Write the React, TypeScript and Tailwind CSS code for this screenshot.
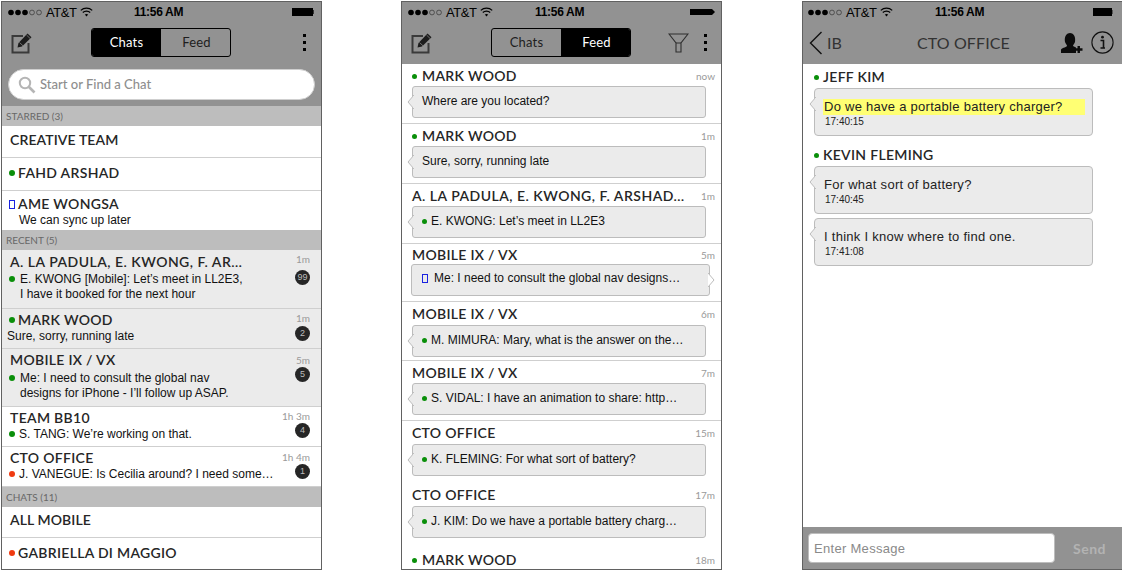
import React from "react";

const LATO = "font-['Lato','Noto_Sans',sans-serif]";
const ARIAL = "font-['Liberation_Sans',Arial,sans-serif]";

function Wifi() {
  return (
    <svg width="13" height="10" viewBox="0 0 13 10" className="block">
      <path d="M0.8 3.4C4 0.4 9 0.4 12.2 3.4" fill="none" stroke="#000" strokeWidth="1.3" />
      <path d="M2.8 5.5C4.8 3.7 8.2 3.7 10.2 5.5" fill="none" stroke="#000" strokeWidth="1.3" />
      <path d="M4.8 7.5C5.8 6.7 7.2 6.7 8.2 7.5L6.5 9.5Z" fill="#000" />
    </svg>
  );
}

function Signal() {
  return (
    <svg width="34" height="7" viewBox="0 0 34 7" className="block">
      <circle cx="3" cy="3.5" r="2.8" fill="#000" />
      <circle cx="10" cy="3.5" r="2.8" fill="#000" />
      <circle cx="17" cy="3.5" r="2.8" fill="#000" />
      <circle cx="24" cy="3.5" r="2.4" fill="none" stroke="#333" strokeWidth="0.7" />
      <circle cx="31" cy="3.5" r="2.4" fill="none" stroke="#333" strokeWidth="0.7" />
    </svg>
  );
}

function Battery({ w, tail }: { w: string; tail: string }) {
  return (
    <div className="flex items-center">
      <div className={`h-[8px] bg-black ${w}`} />
      <div className={`h-[4px] ${tail}`} />
    </div>
  );
}

function StatusBar({ pl, wifiMl, timeMl, batteryMl, children }: { pl: string; wifiMl: string; timeMl: string; batteryMl: string; children: React.ReactNode }) {
  return (
    <div className={`flex items-center h-[19px] pt-[1px] ${pl}`}>
      <Signal />
      <span className={`${ARIAL} text-[13px] leading-none ml-[4px] w-[30px] tracking-[-0.4px] whitespace-nowrap text-black`}>AT&amp;T</span>
      <div className={wifiMl}>
        <Wifi />
      </div>
      <span className={`${ARIAL} text-[12px] leading-none font-bold tracking-[-0.3px] whitespace-nowrap text-black ${timeMl}`}>11:56 AM</span>
      <div className={batteryMl}>{children}</div>
    </div>
  );
}

function Compose() {
  return (
    <svg width="22" height="22" viewBox="0 0 22 22" className="block">
      <path d="M12 4H1.5V20.5H17.5V11" fill="none" stroke="#3a3a3a" strokeWidth="2" />
      <path d="M6.5 15.5L7.5 11L16.5 1.5L20.5 5.2L11 14.5Z" fill="#1c1c1c" />
      <path d="M8.5 10.5L12 13.8M15.5 3L19 6.4" stroke="#929292" strokeWidth="0.7" fill="none" />
    </svg>
  );
}

function Menu() {
  return (
    <div className="flex flex-col gap-[4px] w-[3px]">
      <div className="h-[3px] bg-black" />
      <div className="h-[3px] bg-black" />
      <div className="h-[3px] bg-black" />
    </div>
  );
}

function Segment({ active }: { active: "Chats" | "Feed" }) {
  const on = "bg-black text-white";
  const off = "text-[#1e1e1e]";
  return (
    <div className={`flex h-[29px] w-[140px] rounded-[3px] border border-black overflow-hidden ${LATO} text-[13px] tracking-[0.2px]`}>
      <div className={`w-[69px] flex items-center justify-center ${active === "Chats" ? on : off}`}>Chats</div>
      <div className={`flex-1 pl-[2px] flex items-center justify-center ${active === "Feed" ? on : off}`}>Feed</div>
    </div>
  );
}

function Dot({ color, cls = "" }: { color: "green" | "red" | "blue"; cls?: string }) {
  if (color === "blue") return <div className={`w-[6px] h-[9px] border border-[#1a22e0] shrink-0 ${cls}`} />;
  return <div className={`w-[6px] h-[6px] rounded-full shrink-0 ${color === "green" ? "bg-[#0a8f0a]" : "bg-[#f03a10]"} ${cls}`} />;
}

function Section({ label }: { label: string }) {
  return (
    <div className={`h-[20px] bg-[#bdbdbd] pl-[4px] flex items-center text-[10px] text-[#686868] ${LATO}`}>{label}</div>
  );
}

const titleBase = `${LATO} text-[14px] leading-[16px] font-semibold text-[#262626] whitespace-nowrap`;
const title = `${titleBase} tracking-[0.3px]`;
const titleTight = `${titleBase} tracking-[0.1px]`;
const titleWide = `${titleBase} tracking-[0.48px]`;
const body = `${ARIAL} text-[12px] leading-[15px] text-[#111] whitespace-nowrap`;

function Simple({ name, dot, h, pt }: { name: string; dot?: "green" | "red"; h: string; pt: string }) {
  return (
    <div className={`${h} ${pt} bg-white border-b border-[#cfcfcf] flex items-center pl-[7px]`}>
      {dot ? <Dot color={dot} cls="mr-[3px]" /> : <div className="w-[1px]" />}
      <span className={dot ? title : titleTight}>{name}</span>
    </div>
  );
}

function Recent({
  h, bg, pt, rightPt, badgeMt, name, wide, dot, titleDot, lines, subPl, subMt, dotMr = "mr-[4px]", time, badge,
}: {
  h: string; bg: string; pt: string; rightPt: string; badgeMt: string; name: string; wide?: boolean; dot?: "green" | "red"; titleDot?: boolean;
  lines: string[]; subPl: string; subMt: string; dotMr?: string; time: string; badge: string;
}) {
  return (
    <div className={`${h} ${bg} border-b border-[#cfcfcf] flex justify-between pr-[11px]`}>
      <div className={`${pt} min-w-0`}>
        <div className="flex items-center pl-[7px]">
          {titleDot ? <Dot color="green" cls="mr-[3px]" /> : <div className="w-[1px]" />}
          <span className={wide ? titleWide : title}>{name}</span>
        </div>
        <div className={`${subMt} flex items-start ${subPl}`}>
          {dot ? <Dot color={dot} cls={`mt-[4px] ${dotMr}`} /> : null}
          <div>
            {lines.map((l) => (
              <div key={l} className={body}>{l}</div>
            ))}
          </div>
        </div>
      </div>
      <div className={`${rightPt} flex flex-col items-end`}>
        <div className={`${LATO} text-[10px] leading-[12px] text-[#9a9a9a] whitespace-nowrap`}>{time}</div>
        <div className={`${badgeMt} w-[15px] h-[15px] rounded-full bg-[#262626] text-[#bdbdbd] flex items-center justify-center ${ARIAL} text-[9px] leading-none`}>{badge}</div>
      </div>
    </div>
  );
}

function Tail({ right }: { right?: boolean }) {
  return right ? (
    <svg width="7" height="14" viewBox="0 0 7 14" className="absolute right-[-6px] top-[8px]">
      <path d="M0 0L6 7L0 14" fill="#fff" stroke="#bcbcbc" />
    </svg>
  ) : (
    <svg width="7" height="14" viewBox="0 0 7 14" className="absolute left-[-6px] top-[8px]">
      <path d="M7 0L1 7L7 14" fill="#ebebeb" stroke="#bcbcbc" />
      <rect x="6" y="1" width="1.5" height="12" fill="#ebebeb" />
    </svg>
  );
}

function FeedRow({
  h, name, wide, nameDot, time, text, dot, divider = true, right,
  mt = "mt-[2px]", pt = "pt-[4px]", bubble = true,
}: {
  h: string; name: string; wide?: boolean; nameDot?: boolean; time: string; text: string; dot?: "green" | "blue"; divider?: boolean; right?: boolean; mt?: string; pt?: string; bubble?: boolean;
}) {
  return (
    <div className={`${h} ${pt} shrink-0 ${divider ? "border-b border-[#cfcfcf]" : ""}`}>
      <div className="flex items-center justify-between pl-[10px] pr-[6px] h-[16px]">
        <div className="flex items-center">
          {nameDot && <Dot color="green" cls="mr-[5px] !w-[5px] !h-[5px]" />}
          <span className={wide ? titleWide : title}>{name}</span>
        </div>
        <span className={`${LATO} text-[10px] text-[#9a9a9a] pt-[1px]`}>{time}</span>
      </div>
      {bubble && (
        <div className={`relative ${mt} h-[32px] ${right ? "ml-[9px] w-[299px]" : "ml-[10px] w-[294px]"} bg-[#ebebeb] border border-[#bcbcbc] rounded-[3px] flex items-center pl-[9px] ${right ? "pb-[3px]" : "pb-[1px]"}`}>
          <Tail right={right} />
          {dot === "green" && <Dot color="green" cls="mr-[4px] !w-[5px] !h-[5px]" />}
          {dot === "blue" && <Dot color="blue" cls="mr-[6px] ml-[1px]" />}
          <span className={body}>{text}</span>
        </div>
      )}
    </div>
  );
}

function Bubble({ text, time, highlight, mt }: { text: string; time: string; highlight?: boolean; mt: string }) {
  return (
    <div className={`relative ${mt} ml-[11px] w-[279px] h-[48px] bg-[#ebebeb] border border-[#bcbcbc] rounded-[4px] pt-[10px] pl-[8px]`}>
      <Tail />
      <div className={`${ARIAL} text-[13px] leading-[16px] tracking-[0.27px] text-[#222] whitespace-nowrap pl-[1px] w-[262px] ${highlight ? "bg-[#ffff73]" : ""}`}>{text}</div>
      <div className={`${ARIAL} text-[10px] leading-[13px] text-[#222] pl-[2px]`}>{time}</div>
    </div>
  );
}

const phone = "w-[321px] h-[569px] shrink-0 border border-[#616161] overflow-hidden bg-white flex flex-col";

export default function App() {
  return (
    <div className="w-[1122px] h-[570px] overflow-hidden bg-white flex pl-[1px] pt-[1px]">
      {/* Chats */}
      <div className={phone}>
        <div className="bg-[#929292] h-[104px] shrink-0">
          <StatusBar pl="pl-[6px]" wifiMl="ml-[4px]" timeMl="ml-[41px]" batteryMl="ml-[109px]">
            <Battery w="w-[21px]" tail="w-[1px] bg-[#333]" />
          </StatusBar>
          <div className="flex items-center h-[29px] mt-[7px]">
            <div className="ml-[9px]"><Compose /></div>
            <div className="ml-[58px]"><Segment active="Chats" /></div>
            <div className="ml-[72px]"><Menu /></div>
          </div>
          <div className="mt-[12px] ml-[6px] w-[307px] h-[31px] rounded-full bg-white border border-[#cfcfcf] flex items-center pl-[9px]">
            <svg width="18" height="18" viewBox="0 0 18 18" className="block">
              <circle cx="7" cy="7" r="5.2" fill="none" stroke="#b5b5b5" strokeWidth="2" />
              <path d="M11 11L16.5 16.5" stroke="#b5b5b5" strokeWidth="2.6" />
            </svg>
            <span className={`${LATO} ml-[4px] text-[13px] font-medium text-[#8e8e8e]`}>Start or Find a Chat</span>
          </div>
        </div>
        <Section label="STARRED (3)" />
        <Simple name="CREATIVE TEAM" h="h-[32px]" pt="pb-[3px]" />
        <Simple name="FAHD ARSHAD" dot="green" h="h-[33px]" pt="pb-[2px]" />
        <div className="h-[39px] bg-white pl-[7px] pt-[5px]">
          <div className="flex items-center">
            <Dot color="blue" cls="mr-[3px]" />
            <span className={title}>AME WONGSA</span>
          </div>
          <div className={`${body} pl-[10px] mt-[1px]`}>We can sync up later</div>
        </div>
        <Section label="RECENT (5)" />
        <Recent h="h-[59px]" bg="bg-[#ebebeb]" pt="pt-[4px]" rightPt="pt-[3px]" badgeMt="mt-[5px]" name="A. LA PADULA, E. KWONG, F. AR…" wide dot="green" lines={["E. KWONG [Mobile]: Let’s meet in LL2E3,", "I have it booked for the next hour"]} subPl="pl-[7px]" subMt="mt-[2px]" dotMr="mr-[5px]" time="1m" badge="99" />
        <Recent h="h-[40px]" bg="bg-[#ebebeb]" pt="pt-[3px]" rightPt="pt-[3px]" badgeMt="mt-[2px]" name="MARK WOOD" titleDot lines={["Sure, sorry, running late"]} subPl="pl-[5px]" subMt="mt-[1px]" time="1m" badge="2" />
        <Recent h="h-[58px]" bg="bg-[#ebebeb]" pt="pt-[3px]" rightPt="pt-[5px]" badgeMt="mt-[1px]" name="MOBILE IX / VX" dot="green" lines={["Me: I need to consult the global nav", "designs for iPhone - I’ll follow up ASAP."]} subPl="pl-[7px]" subMt="mt-[3px]" dotMr="mr-[5px]" time="5m" badge="5" />
        <Recent h="h-[40px]" bg="bg-white" pt="pt-[3px]" rightPt="pt-[3px]" badgeMt="mt-[1px]" name="TEAM BB10" dot="green" lines={["S. TANG: We’re working on that."]} subPl="pl-[7px]" subMt="mt-[1px]" time="1h 3m" badge="4" />
        <Recent h="h-[40px]" bg="bg-white" pt="pt-[3px]" rightPt="pt-[4px]" badgeMt="mt-[1px]" name="CTO OFFICE" dot="red" lines={["J. VANEGUE: Is Cecilia around? I need some…"]} subPl="pl-[7px]" subMt="mt-[1px]" time="1h 4m" badge="1" />
        <Section label="CHATS (11)" />
        <Simple name="ALL MOBILE" h="h-[31px]" pt="pb-[4px]" />
        <div className="h-[31px] bg-white flex items-center pl-[7px] pb-[2px]">
          <Dot color="red" cls="mr-[3px]" />
          <span className={title}>GABRIELLA DI MAGGIO</span>
        </div>
      </div>

      {/* Feed */}
      <div className={`${phone} ml-[79px]`}>
        <div className="bg-[#929292] h-[62px] shrink-0">
          <StatusBar pl="pl-[6px]" wifiMl="ml-[4px]" timeMl="ml-[42px]" batteryMl="ml-[106px]">
            <div className="flex items-center">
              <div className="w-[22px] h-[6px] bg-black" />
              <div className="w-0 h-0 border-y-[3px] border-y-transparent border-l-[3px] border-l-black" />
            </div>
          </StatusBar>
          <div className="flex items-center h-[29px] mt-[7px]">
            <div className="ml-[9px]"><Compose /></div>
            <div className="ml-[58px]"><Segment active="Feed" /></div>
            <div className="ml-[37px]">
              <svg width="21" height="20" viewBox="0 0 21 20" className="block">
                <path d="M1 1H20L13 10V19H8V10Z" fill="none" stroke="#2e2e2e" strokeWidth="1.1" />
                <path d="M8 10H13" stroke="#2e2e2e" strokeWidth="1" />
              </svg>
            </div>
            <div className="ml-[15px]"><Menu /></div>
          </div>
        </div>
        <FeedRow h="h-[60px]" name="MARK WOOD" nameDot time="now" text="Where are you located?" />
        <FeedRow h="h-[60px]" name="MARK WOOD" nameDot time="1m" text="Sure, sorry, running late" />
        <FeedRow h="h-[60px]" name="A. LA PADULA, E. KWONG, F. ARSHAD…" wide time="1m" text="E. KWONG: Let’s meet in LL2E3" dot="green" />
        <FeedRow h="h-[58px]" pt="pt-[3px]" mt="mt-[1px]" name="MOBILE IX / VX" time="5m" text="Me: I need to consult the global nav designs…" dot="blue" right />
        <FeedRow h="h-[59px]" pt="pt-[4px]" mt="mt-[3px]" name="MOBILE IX / VX" time="6m" text="M. MIMURA: Mary, what is the answer on the…" dot="green" />
        <FeedRow h="h-[60px]" name="MOBILE IX / VX" time="7m" text="S. VIDAL: I have an animation to share: http…" dot="green" />
        <FeedRow h="h-[62px]" pt="pt-[4px]" mt="mt-[3px]" name="CTO OFFICE" time="15m" text="K. FLEMING: For what sort of battery?" dot="green" divider={false} />
        <FeedRow h="h-[65px]" pt="pt-[4px]" mt="mt-[3px]" name="CTO OFFICE" time="17m" text="J. KIM: Do we have a portable battery charg…" dot="green" divider={false} />
        <FeedRow h="h-[30px]" pt="pt-[4px]" name="MARK WOOD" nameDot time="18m" text="" divider={false} bubble={false} />
      </div>

      {/* Conversation */}
      <div className={`${phone} ml-[80px]`}>
        <div className="bg-[#929292] h-[62px] shrink-0">
          <StatusBar pl="pl-[5px]" wifiMl="ml-[4px]" timeMl="ml-[42px]" batteryMl="ml-[109px]">
            <Battery w="w-[19px]" tail="w-[1px] bg-[#555]" />
          </StatusBar>
          <div className="flex items-center h-[29px] mt-[7px]">
            <svg width="14" height="24" viewBox="0 0 14 24" className="block ml-[6px] shrink-0">
              <path d="M12.5 1L1.5 12L12.5 23" fill="none" stroke="#111" strokeWidth="1.4" />
            </svg>
            <span className={`${LATO} text-[16px] w-[13px] text-[#333] ml-[4px]`}>IB</span>
            <span className={`${LATO} text-[16px] text-[#333] tracking-[0.1px] ml-[77px] w-[92px] text-center whitespace-nowrap`}>CTO OFFICE</span>
            <svg width="23" height="22" viewBox="0 0 23 22" className="block ml-[51px] shrink-0">
              <path d="M5 10C4 4 7 1 10 1C13 1 16 4 15 10C14 12.5 13 13 13 14L16 15.5V21H1V18C1 16 6 15.5 7 14C7 13 6 12.5 5 10Z" fill="#0c0c0c" />
              <path d="M15 17.5H22.5M18.75 14V21" stroke="#0c0c0c" strokeWidth="2.4" />
            </svg>
            <svg width="23" height="23" viewBox="0 0 23 23" className="block ml-[8px] shrink-0">
              <circle cx="11.5" cy="11.5" r="10.6" fill="none" stroke="#111" strokeWidth="1.1" />
              <circle cx="11.5" cy="6.2" r="1.4" fill="#111" />
              <path d="M9.5 9.5H12.5V16.5M9.5 17H14" fill="none" stroke="#111" strokeWidth="1.6" />
            </svg>
          </div>
        </div>
        <div className="flex-1 pt-[5px]">
          <div className="flex items-center pl-[11px] h-[16px]">
            <Dot color="green" cls="mr-[4px] !w-[5px] !h-[5px]" />
            <span className={title}>JEFF KIM</span>
          </div>
          <Bubble mt="mt-[3px]" text="Do we have a portable battery charger?" time="17:40:15" highlight />
          <div className="flex items-center pl-[11px] h-[16px] mt-[11px]">
            <Dot color="green" cls="mr-[4px] !w-[5px] !h-[5px]" />
            <span className={title}>KEVIN FLEMING</span>
          </div>
          <Bubble mt="mt-[3px]" text="For what sort of battery?" time="17:40:45" />
          <Bubble mt="mt-[4px]" text="I think I know where to find one." time="17:41:08" />
        </div>
        <div className="bg-[#929292] h-[42px] shrink-0 flex items-center pl-[5px]">
          <div className={`w-[247px] h-[30px] bg-white rounded-[4px] border border-[#bdbdbd] flex items-center pl-[5px] pt-[1px] ${ARIAL} text-[13px] tracking-[0.3px] text-[#8a8a8a]`}>Enter Message</div>
          <span className={`${LATO} ml-[18px] text-[14px] font-bold tracking-[0.5px] text-[#b3b3b3]`}>Send</span>
        </div>
      </div>
    </div>
  );
}
